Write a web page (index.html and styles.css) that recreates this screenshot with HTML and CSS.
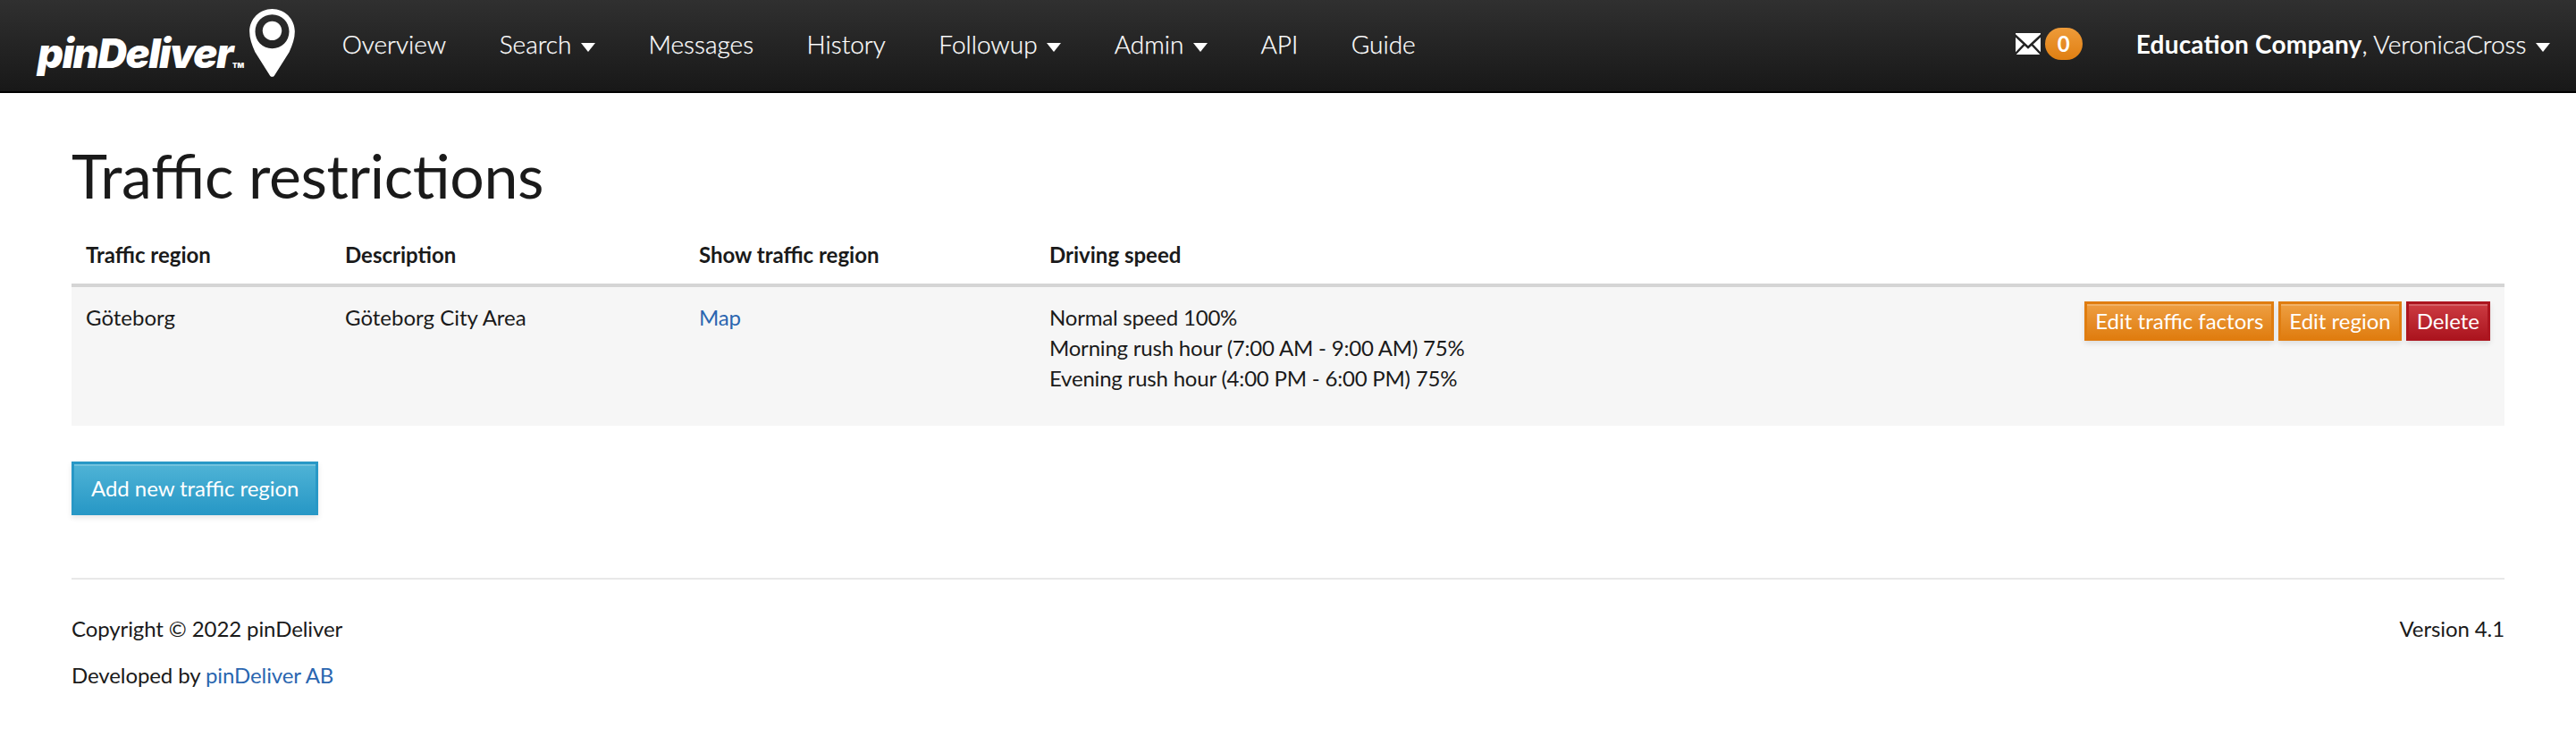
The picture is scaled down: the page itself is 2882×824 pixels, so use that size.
FILE: index.html
```html
<!DOCTYPE html>
<html lang="en">
<head>
    <meta charset="UTF-8">
    <title>Traffic restrictions</title>
    <link rel="stylesheet" href="styles.css">
</head>
<body>
    <header class="navbar">
        <a class="brand" href="#">
            <span class="brand-name">pinDeliver<span class="brand-tm">TM</span></span>
            <svg class="brand-pin" viewBox="0 0 52 78" width="51" height="76">
                <path fill="#fff" fill-rule="evenodd" d="M26 0C11.600 0 0 11.500 0 26c0 8 2.600 15.200 6.400 23.400L23.600 76.600c1.200 1.600 3.600 1.600 4.800 0L45.600 49.400C49.400 41.200 52 34 52 26 52 11.500 40.400 0 26 0ZM26 6.500C37 6.500 45.500 15.200 45.500 26S37 45.500 26 45.500 6.500 36.800 6.500 26 15 6.500 26 6.500Z"/>
                <circle fill="#fff" cx="26" cy="25" r="11"/>
            </svg>
        </a>
        <nav class="nav">
            <a href="#">Overview</a>
            <a href="#">Search <span class="caret"></span></a>
            <a href="#">Messages</a>
            <a href="#">History</a>
            <a href="#">Followup <span class="caret"></span></a>
            <a href="#">Admin <span class="caret"></span></a>
            <a href="#">API</a>
            <a href="#">Guide</a>
        </nav>
        <div class="nav-right">
            <a class="inbox" href="#">
                <svg viewBox="0 0 28 24" width="28" height="24">
                    <rect fill="#fff" width="28" height="24"/>
                    <path fill="none" stroke="#222" stroke-width="2.500" d="M-1 2 14 16 29 2M-1 24 10 12.500M29 24 18 12.500"/>
                </svg>
                <span class="badge">0</span>
            </a>
            <a class="user" href="#"><strong>Education Company</strong>, VeronicaCross <span class="caret"></span></a>
        </div>
    </header>

    <main class="container">
        <h1>Traffic restrictions</h1>
        <table class="regions">
            <thead>
                <tr>
                    <th class="col-region">Traffic region</th>
                    <th class="col-desc">Description</th>
                    <th class="col-map">Show traffic region</th>
                    <th class="col-speed">Driving speed</th>
                    <th></th>
                </tr>
            </thead>
            <tbody>
                <tr>
                    <td class="name">Göteborg</td>
                    <td class="name">Göteborg City Area</td>
                    <td><a href="#">Map</a></td>
                    <td>
                        Normal speed 100%<br>
                        Morning rush hour (7:00 AM - 9:00 AM) 75%<br>
                        Evening rush hour (4:00 PM - 6:00 PM) 75%
                    </td>
                    <td class="actions">
                        <a class="btn btn-orange" href="#">Edit traffic factors</a>
                        <a class="btn btn-orange" href="#">Edit region</a>
                        <a class="btn btn-red" href="#">Delete</a>
                    </td>
                </tr>
            </tbody>
        </table>
        <a class="btn btn-blue" href="#">Add new traffic region</a>
    </main>

    <footer class="container footer">
        <div class="footer-row">
            <p>Copyright © 2022 pinDeliver</p>
            <p>Version 4.1</p>
        </div>
        <p>Developed by <a href="#">pinDeliver AB</a></p>
    </footer>
</body>
</html>
```

FILE: styles.css
```css
body {
    font-family: 'Lato', sans-serif;
    font-size: 24px;
    line-height: 34px;
    letter-spacing: -0.2px;
    font-feature-settings: "liga" 1;
    color: #1a1a1a;
    background-color: #ffffff;
    margin: 0;
}

a {
    color: #2a66b0;
    text-decoration: none;
}

.navbar {
    display: flex;
    align-items: center;
    height: 98px;
    padding: 0 29px 4px 42px;
    background: linear-gradient(#303030, #181818);
    border-bottom: 2px solid #000000;
}

.brand {
    display: flex;
    align-items: flex-end;
    height: 76px;
    margin-top: -2px;
    color: #ffffff;
}

.brand-name {
    font-family: 'Inter', sans-serif;
    font-size: 45px;
    line-height: 60px;
    font-weight: 900;
    font-style: italic;
    letter-spacing: -1.400px;
    margin-bottom: -17px;
}

.brand-tm {
    font-size: 8px;
    font-style: normal;
    letter-spacing: 0;
}

.brand-pin {
    margin-left: 6px;
}

.nav {
    display: flex;
    gap: 59.5px;
    margin-left: 52.5px;
}

.nav a,
.nav-right a {
    color: #ffffff;
    font-size: 28px;
    font-weight: 300;
    letter-spacing: 0;
    -webkit-text-stroke: 0.25px #ffffff;
}

.caret {
    display: inline-block;
    width: 0;
    height: 0;
    margin-left: 3px;
    vertical-align: middle;
    border-top: 10px solid #ffffff;
    border-left: 8px solid transparent;
    border-right: 8px solid transparent;
}

.nav-right {
    display: flex;
    align-items: center;
    margin-left: auto;
}

.nav-right .inbox {
    display: flex;
    align-items: center;
    gap: 5px;
    margin-right: 60px;
}

.nav-right .badge {
    width: 42px;
    height: 36px;
    border-radius: 18px;
    background: linear-gradient(#ee9b3a, #e07f12);
    color: #ffffff;
    font-size: 24px;
    line-height: 36px;
    font-weight: 700;
    text-align: center;
    -webkit-text-stroke: 0;
}

.user strong {
    font-weight: 700;
    letter-spacing: 0.2px;
    -webkit-text-stroke: 0;
}

.container {
    margin: 0 80px;
}

h1 {
    font-size: 68px;
    line-height: 80px;
    font-weight: 400;
    letter-spacing: -0.4px;
    margin: 52px 0 21px;
}

.regions {
    width: 100%;
    table-layout: fixed;
    border-collapse: collapse;
    margin-bottom: 40px;
}

.regions th {
    box-sizing: border-box;
    text-align: left;
    font-weight: 700;
    letter-spacing: 0;
    padding: 11px 16px 15px;
    border-bottom: 4px solid #d5d5d5;
}

.regions td {
    vertical-align: top;
    height: 157px;
    box-sizing: border-box;
    padding: 17px 16px;
    background-color: #f6f6f6;
}

.regions td.name {
    letter-spacing: 0;
}

.col-region {
    width: 290px;
}

.col-desc {
    width: 396px;
}

.col-map {
    width: 392px;
}

.col-speed {
    width: 700px;
}

.regions .actions {
    padding-top: 16px;
    text-align: right;
    white-space: nowrap;
    font-size: 0;
}

.btn {
    display: inline-block;
    color: #ffffff;
    font-size: 24px;
    border: 3px solid;
    box-shadow: 0 3px 6px rgba(0, 0, 0, 0.1), inset 0 2px 0 rgba(255, 255, 255, 0.2);
}

.actions .btn {
    padding: 0 9px;
    line-height: 38px;
    letter-spacing: 0;
    margin-left: 5px;
}

.btn-orange {
    background: linear-gradient(#ee9f42, #e07d10);
    border-color: #e07d10;
}

.btn-red {
    background: linear-gradient(#cc3b42, #ac151f);
    border-color: #ac151f;
}

.btn-blue {
    background: linear-gradient(#4fb3d6, #2898c6);
    border-color: #2898c6;
    padding: 0 19px;
    line-height: 54px;
    letter-spacing: -0.05px;
}

.footer {
    margin-top: 70px;
    padding-top: 38px;
    border-top: 2px solid #e8e8e8;
    letter-spacing: -0.1px;
}

.footer p {
    margin: 0 0 18px;
}

.footer-row {
    display: flex;
    justify-content: space-between;
}
```
